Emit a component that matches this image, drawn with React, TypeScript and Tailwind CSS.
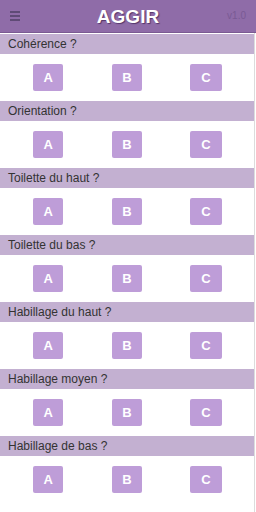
import React from "react";

const questions = [
  "Cohérence ?",
  "Orientation ?",
  "Toilette du haut ?",
  "Toilette du bas ?",
  "Habillage du haut ?",
  "Habillage moyen ?",
  "Habillage de bas ?",
];

function Btn({ label, w }: { label: string; w: string }) {
  return (
    <div
      className={`${w} h-[27px] rounded-[2px] bg-[#be9dd8] text-white text-[13px] font-bold flex items-center justify-center`}
    >
      {label}
    </div>
  );
}

export default function App() {
  return (
    <div
      className="w-[256px] h-[512px] bg-white overflow-hidden"
      style={{ fontFamily: '"Liberation Sans", Arial, sans-serif' }}
    >
      <div className="h-[33px] bg-[#8f6ca8] border-b border-[#7a5a92] flex items-center relative">
        <div className="absolute left-[10px] top-[11px] flex flex-col gap-[2px]">
          <div className="w-[10px] h-[2px] bg-[#5f4a76]" />
          <div className="w-[10px] h-[2px] bg-[#5f4a76]" />
          <div className="w-[10px] h-[2px] bg-[#5f4a76]" />
        </div>
        <div
          className="flex-1 text-center text-white font-bold text-[19px] leading-none"
          style={{ textShadow: "1px 1px 1px rgba(60,30,80,0.7)" }}
        >
          AGGIR
        </div>
        <div className="absolute right-[10px] top-[11px] text-[10px] leading-none text-[#7a5a94]">
          v1.0
        </div>
      </div>
      <div className="w-[255px] border-r border-[#dcdcdc] pt-[1px] h-[479px]">
        {questions.map((q) => (
          <div key={q}>
            <div className="h-[20px] bg-[#c3b0d1] flex items-center pl-[8px] text-[12px] text-[#333]">
              {q}
            </div>
            <div className="h-[47px] px-[8px] grid grid-cols-3 items-center">
              <div className="flex justify-center pl-[1px]">
                <Btn label="A" w="w-[30px]" />
              </div>
              <div className="flex justify-center">
                <Btn label="B" w="w-[30px]" />
              </div>
              <div className="flex justify-center pr-[1px]">
                <Btn label="C" w="w-[32px]" />
              </div>
            </div>
          </div>
        ))}
      </div>
    </div>
  );
}
